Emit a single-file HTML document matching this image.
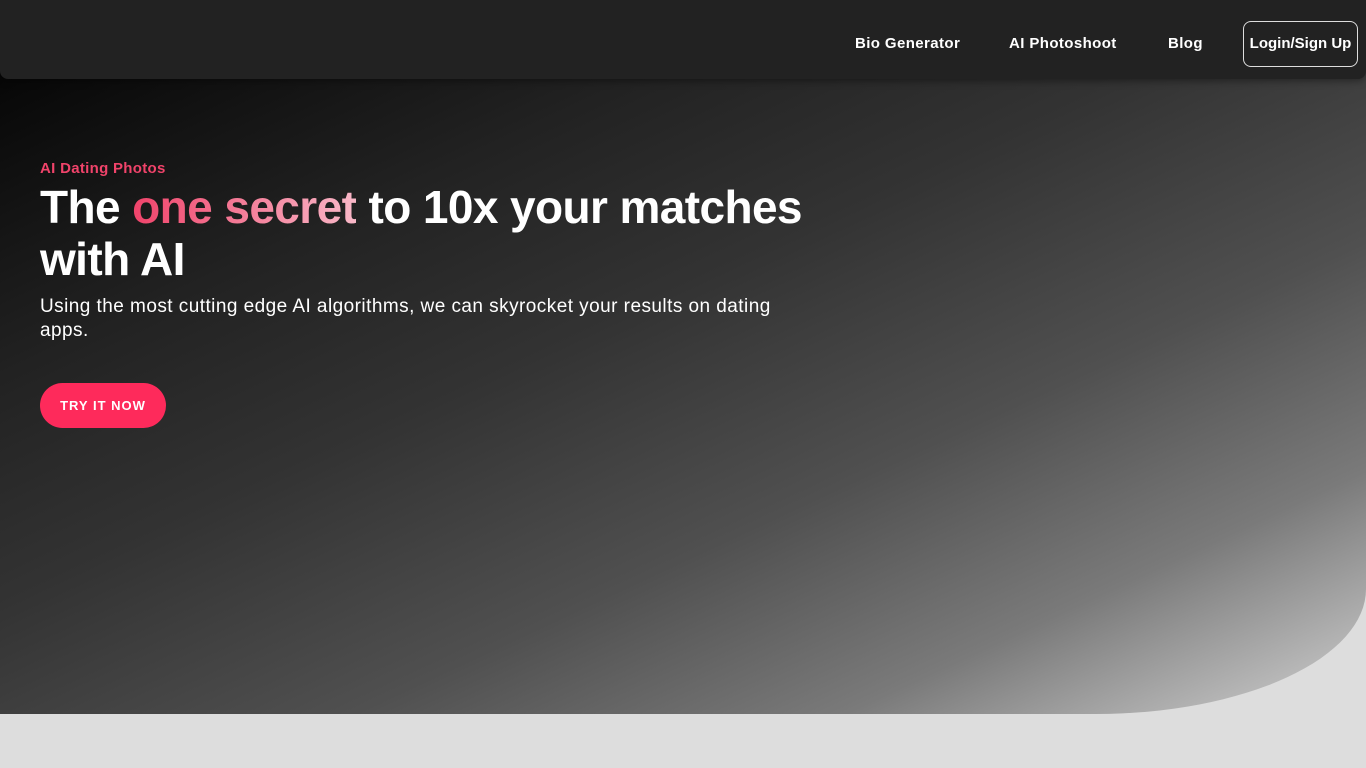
<!DOCTYPE html>
<html><head><meta charset="utf-8"><style>
*{margin:0;padding:0;box-sizing:border-box}
body{width:1366px;height:768px;background:#dddddd;font-family:"Liberation Sans",sans-serif;overflow:hidden;position:relative}
.hero{position:absolute;left:0;top:0;width:1366px;height:714px;border-bottom-right-radius:270px 125px;
background:linear-gradient(155deg,#000 0%,#222 28%,#333 45%,#505050 65%,#7a7a7a 82%,#d2d2d2 100%)}
.nav{position:absolute;left:0;top:0;width:1366px;height:79px;background:#222;border-radius:0 0 8px 8px;box-shadow:0 2px 8px rgba(0,0,0,.4)}
.nav a{position:absolute;top:35px;color:#fff;font-size:15px;font-weight:bold;letter-spacing:.4px;text-decoration:none}
.login{position:absolute;left:1243px;top:21px;width:115px;height:46px;border:1px solid #ddd;border-radius:8px;color:#fff;font-size:15px;font-weight:bold;text-align:center;line-height:44px}
.tag{position:absolute;left:40px;top:160px;color:#f0436a;font-size:15px;font-weight:bold;letter-spacing:.3px}
h1{position:absolute;left:40px;top:181px;color:#fff;font-size:46px;line-height:52px;font-weight:bold;width:820px;letter-spacing:-.6px}
.pk{background:linear-gradient(90deg,#f0436a,#f9b8c8);-webkit-background-clip:text;color:transparent}
p{position:absolute;left:40px;top:295px;color:#fff;font-size:19px;line-height:24px;width:775px;letter-spacing:.45px}
.btn{position:absolute;left:40px;top:383px;width:126px;height:45px;border-radius:23px;background:#fe2a5b;color:#fff;font-size:13px;font-weight:bold;letter-spacing:1px;text-align:center;line-height:45px}
</style></head><body>
<div class="hero"></div>
<div class="nav">
<a style="left:855px">Bio Generator</a>
<a style="left:1009px">AI Photoshoot</a>
<a style="left:1168px">Blog</a>
<div class="login">Login/Sign Up</div>
</div>
<div class="tag">AI Dating Photos</div>
<h1>The <span class="pk">one secret</span> to 10x your matches with AI</h1>
<p>Using the most cutting edge AI algorithms, we can skyrocket your results on dating apps.</p>
<div class="btn">TRY IT NOW</div>
</body></html>
